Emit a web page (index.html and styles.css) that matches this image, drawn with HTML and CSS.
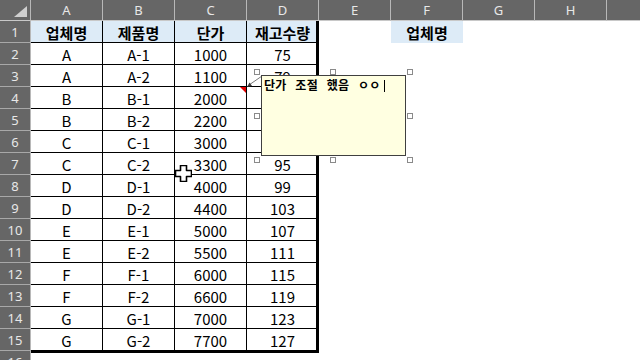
FILE: index.html
```html
<!DOCTYPE html>
<html lang="ko">
<head>
    <meta charset="UTF-8">
    <title>재고 현황</title>
    <link rel="stylesheet" href="styles.css">
</head>
<body>

<div class="sheet">
    <!-- column letters -->
    <div class="row cols">
        <div class="corner"><span class="tri"></span></div>
        <div>A</div><div>B</div><div>C</div><div>D</div><div>E</div><div>F</div><div>G</div><div>H</div><div></div>
    </div>

    <div class="row">
        <div class="rh">1</div>
        <div class="c hd">업체명</div><div class="c hd">제품명</div><div class="c hd">단가</div><div class="c hd end">재고수량</div>
        <div></div><div class="hd fill">업체명</div>
    </div>
    <div class="row"><div class="rh">2</div><div class="c">A</div><div class="c">A-1</div><div class="c">1000</div><div class="c end">75</div></div>
    <div class="row"><div class="rh">3</div><div class="c">A</div><div class="c">A-2</div><div class="c">1100</div><div class="c end">79</div></div>
    <div class="row"><div class="rh">4</div><div class="c">B</div><div class="c">B-1</div><div class="c memo">2000</div><div class="c end">83</div></div>
    <div class="row"><div class="rh">5</div><div class="c">B</div><div class="c">B-2</div><div class="c">2200</div><div class="c end">87</div></div>
    <div class="row"><div class="rh">6</div><div class="c">C</div><div class="c">C-1</div><div class="c">3000</div><div class="c end">91</div></div>
    <div class="row"><div class="rh">7</div><div class="c">C</div><div class="c">C-2</div><div class="c">3300</div><div class="c end">95</div></div>
    <div class="row"><div class="rh">8</div><div class="c">D</div><div class="c">D-1</div><div class="c">4000</div><div class="c end">99</div></div>
    <div class="row"><div class="rh">9</div><div class="c">D</div><div class="c">D-2</div><div class="c">4400</div><div class="c end">103</div></div>
    <div class="row"><div class="rh">10</div><div class="c">E</div><div class="c">E-1</div><div class="c">5000</div><div class="c end">107</div></div>
    <div class="row"><div class="rh">11</div><div class="c">E</div><div class="c">E-2</div><div class="c">5500</div><div class="c end">111</div></div>
    <div class="row"><div class="rh">12</div><div class="c">F</div><div class="c">F-1</div><div class="c">6000</div><div class="c end">115</div></div>
    <div class="row"><div class="rh">13</div><div class="c">F</div><div class="c">F-2</div><div class="c">6600</div><div class="c end">119</div></div>
    <div class="row"><div class="rh">14</div><div class="c">G</div><div class="c">G-1</div><div class="c">7000</div><div class="c end">123</div></div>
    <div class="row"><div class="rh">15</div><div class="c">G</div><div class="c">G-2</div><div class="c">7700</div><div class="c end">127</div></div>
    <div class="row"><div class="rh">16</div><div class="base"></div><div class="base"></div><div class="base"></div><div class="base"></div></div>

    <!-- memo on C4 -->
    <svg class="pointer" width="30" height="24" viewBox="0 0 30 24">
        <line x1="21" y1="6" x2="8" y2="15" stroke="#7a7a7a" stroke-width="1"/>
        <polygon points="6,17 8.5,12.5 11,16" fill="#3a3a3a"/>
    </svg>
    <div class="frame">
        <span class="handle nw"></span><span class="handle n"></span><span class="handle ne"></span>
        <span class="handle w"></span><span class="handle e"></span>
        <span class="handle sw"></span><span class="handle s"></span><span class="handle se"></span>
    </div>
    <div class="note">단가 조절 했음 ㅇㅇ<span class="caret"></span></div>

    <!-- mouse pointer -->
    <svg class="mouse" width="17" height="17" viewBox="0 0 17 17">
        <path d="M5.5 0.5h6v5h5v6h-5v5h-6v-5h-5v-6h5z" fill="#fff" stroke="#000" stroke-width="1.6" stroke-linejoin="round"/>
    </svg>
</div>

</body>
</html>
```

FILE: styles.css
```css
* {
    margin: 0;
    padding: 0;
    box-sizing: border-box;
}
body {
    background: #fff;
    font-family: "Noto Sans CJK KR", "Noto Sans", sans-serif;
    color: #000;
    overflow: hidden;
}

.sheet {
    position: relative;
    width: 640px;
    height: 360px;
    overflow: hidden;
}

/* one grid per sheet row */
.row {
    display: grid;
    grid-template-columns: 31px repeat(9, 72px);
    height: 22px;
}

/* Headers */
.cols {
    height: 21px;
    background: #666;
}
.cols div {
    border-right: 1px solid #b8b8b8;
    border-bottom: 1px solid #c8c8c8;
    color: #e8e8e8;
    font: 13px "Noto Sans", sans-serif;
    display: flex;
    align-items: center;
    justify-content: center;
}
.corner {
    position: relative;
}
.tri {
    position: absolute;
    right: 3px;
    bottom: 3px;
    width: 0;
    height: 0;
    border-left: 13px solid transparent;
    border-bottom: 11px solid #cfcfcf;
}
.rh {
    background: #666;
    border-right: 1px solid #b8b8b8;
    border-bottom: 1px solid #a8a8a8;
    color: #e8e8e8;
    font: 13px "Noto Sans", sans-serif;
    display: flex;
    align-items: center;
    justify-content: center;
}

/* Cells */
.c {
    border-right: 1px solid #000;
    border-bottom: 1px solid #000;
    display: flex;
    align-items: center;
    justify-content: center;
    font-size: 15px;
    line-height: 1;
    padding-top: 1px;
}
.c.end {
    border-right-width: 3px;
    padding-left: 2px;
}
.hd {
    background: #ddebf7;
    font-weight: bold;
}
.fill {
    display: flex;
    align-items: center;
    justify-content: center;
    font-size: 15px;
    line-height: 1;
    padding-top: 1px;
}
.base {
    border-top: 2px solid #000;
}
.memo {
    position: relative;
}
.memo::after {
    content: "";
    position: absolute;
    top: 0;
    right: 0;
    border-top: 6px solid #e00000;
    border-left: 6px solid transparent;
}

/* Memo box */
.pointer {
    position: absolute;
    left: 241px;
    top: 70px;
}
.frame {
    position: absolute;
    left: 254px;
    top: 69px;
    width: 159px;
    height: 94px;
}
.handle {
    position: absolute;
    width: 6px;
    height: 6px;
    background: #fff;
    border: 1px solid #8a8a8a;
}
.nw, .n, .ne { top: 0; }
.w, .e { top: 44px; }
.sw, .s, .se { bottom: 0; }
.nw, .w, .sw { left: 0; }
.n, .s { left: 76px; }
.ne, .e, .se { right: 0; }

.note {
    position: absolute;
    left: 261px;
    top: 75px;
    width: 145px;
    height: 81px;
    background: #ffffe1;
    border: 1px solid #404040;
    padding: 1px 2px;
    font-size: 12px;
    font-weight: bold;
    line-height: 16px;
    word-spacing: 5px;
    letter-spacing: 0.3px;
    white-space: nowrap;
}
.caret {
    display: inline-block;
    width: 1px;
    height: 12px;
    background: #000;
    margin-left: 3px;
    vertical-align: -2px;
}

.mouse {
    position: absolute;
    left: 175px;
    top: 165px;
}
```
